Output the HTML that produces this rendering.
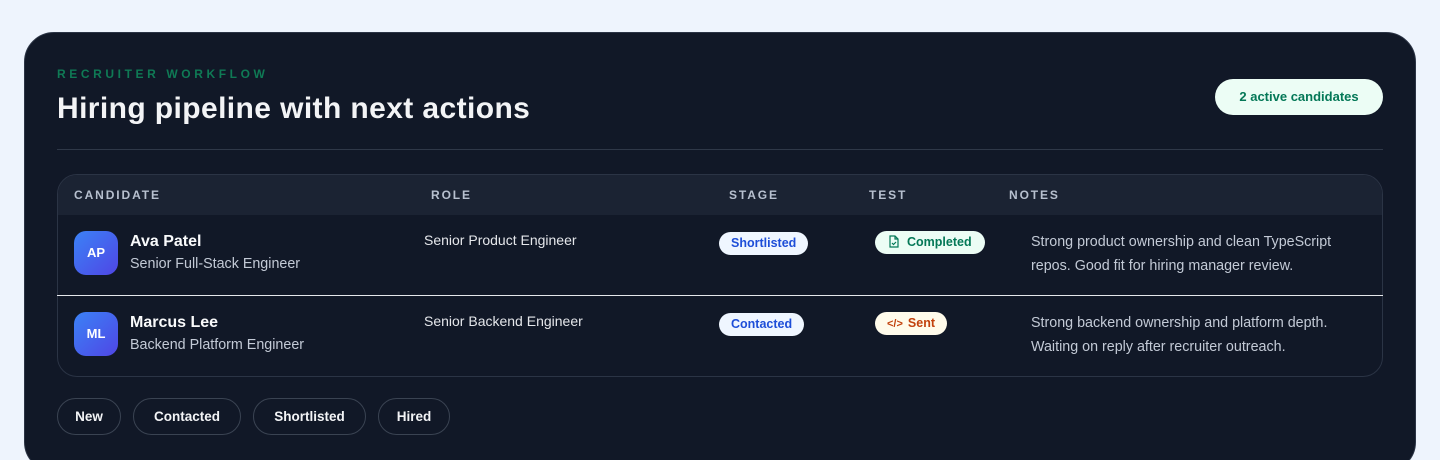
<!DOCTYPE html>
<html><head><meta charset="utf-8"><style>
*{margin:0;padding:0;box-sizing:border-box}
html,body{width:1440px;height:460px;overflow:hidden}
body{background:#eef4fd;font-family:"Liberation Sans",sans-serif;position:relative}
.card{position:absolute;left:24px;top:32px;width:1392px;height:440px;background:#111827;border:1px solid #2b3445;border-radius:30px}
.a{position:absolute;white-space:nowrap}
.eyebrow{left:57px;top:67px;font-size:12px;font-weight:700;letter-spacing:3.6px;color:#0f7a55}
h1{position:absolute;left:57px;top:92px;font-size:30px;font-weight:700;color:#f3f4f6;letter-spacing:0.4px}
.badge{left:1215px;top:79px;width:168px;height:36px;border-radius:18px;background:#ecfdf5;color:#047857;font-size:13px;font-weight:700;text-align:center;line-height:36px}
.hr{position:absolute;left:57px;top:149px;width:1326px;height:1px;background:#2f3848}
.tbl{position:absolute;left:57px;top:174px;width:1326px;height:203px;border:1px solid #2b3445;border-radius:20px;overflow:hidden;background:#111827}
.th{position:absolute;left:0;top:0;width:100%;height:40px;background:#1b2333}
.h{font-size:12px;font-weight:700;letter-spacing:1.9px;color:#b7c0cf;top:188px}
.sep{position:absolute;left:57px;top:295px;width:1326px;height:1px;background:#e5e7eb}
.av{width:44px;height:44px;border-radius:12px;background:linear-gradient(135deg,#3b82f6,#4f46e5);color:#fff;font-weight:700;font-size:13px;text-align:center;line-height:44px}
.nm{font-size:16px;font-weight:700;color:#f9fafb}
.sub{font-size:14.3px;color:#c3cad6}
.role{font-size:14px;color:#e5e7eb}
.pill{height:23px;border-radius:12px;font-size:12.5px;font-weight:700;line-height:23px;padding:0 12px}
.blue{background:#eff6ff;color:#1d4ed8}
.green{background:#ecfdf5;color:#047857}
.amber{background:#fffbeb;color:#c2410c}
.note{font-size:14.3px;color:#c3cad6;line-height:24px}
.btn{top:398px;height:37px;border:1px solid #3a4352;border-radius:19px;color:#f3f4f6;font-size:13.5px;font-weight:700;line-height:35px;text-align:center}
</style></head><body>
<div class="card"></div>
<div class="a eyebrow">RECRUITER WORKFLOW</div>
<h1>Hiring pipeline with next actions</h1>
<div class="a badge">2 active candidates</div>
<div class="hr"></div>
<div class="tbl"><div class="th"></div></div>
<div class="a h" style="left:74px">CANDIDATE</div>
<div class="a h" style="left:431px">ROLE</div>
<div class="a h" style="left:729px">STAGE</div>
<div class="a h" style="left:869px">TEST</div>
<div class="a h" style="left:1009px">NOTES</div>

<div class="a av" style="left:74px;top:231px">AP</div>
<div class="a nm" style="left:130px;top:233px">Ava Patel</div>
<div class="a sub" style="left:130px;top:256px">Senior Full-Stack Engineer</div>
<div class="a role" style="left:424px;top:232px">Senior Product Engineer</div>
<div class="a pill blue" style="left:719px;top:232px">Shortlisted</div>
<div class="a pill green" style="left:875px;top:231px;padding-left:13px;padding-right:13px"><svg width="12" height="13" viewBox="0 0 12 13" style="vertical-align:-2px;margin-right:7px"><path d="M2 1h5l3 3v8H2z M7 1v3h3 M4 8l1.5 1.5L8 7" fill="none" stroke="#047857" stroke-width="1.2"/></svg>Completed</div>
<div class="a note" style="left:1031px;top:230px">Strong product ownership and clean TypeScript<br>repos. Good fit for hiring manager review.</div>

<div class="sep"></div>

<div class="a av" style="left:74px;top:312px">ML</div>
<div class="a nm" style="left:130px;top:314px">Marcus Lee</div>
<div class="a sub" style="left:130px;top:337px">Backend Platform Engineer</div>
<div class="a role" style="left:424px;top:313px">Senior Backend Engineer</div>
<div class="a pill blue" style="left:719px;top:313px">Contacted</div>
<div class="a pill amber" style="left:875px;top:312px"><span style="font-size:11px;margin-right:5px">&lt;/&gt;</span>Sent</div>
<div class="a note" style="left:1031px;top:311px">Strong backend ownership and platform depth.<br>Waiting on reply after recruiter outreach.</div>

<div class="a btn" style="left:57px;width:64px">New</div>
<div class="a btn" style="left:133px;width:108px">Contacted</div>
<div class="a btn" style="left:253px;width:113px">Shortlisted</div>
<div class="a btn" style="left:378px;width:72px">Hired</div>
</body></html>
